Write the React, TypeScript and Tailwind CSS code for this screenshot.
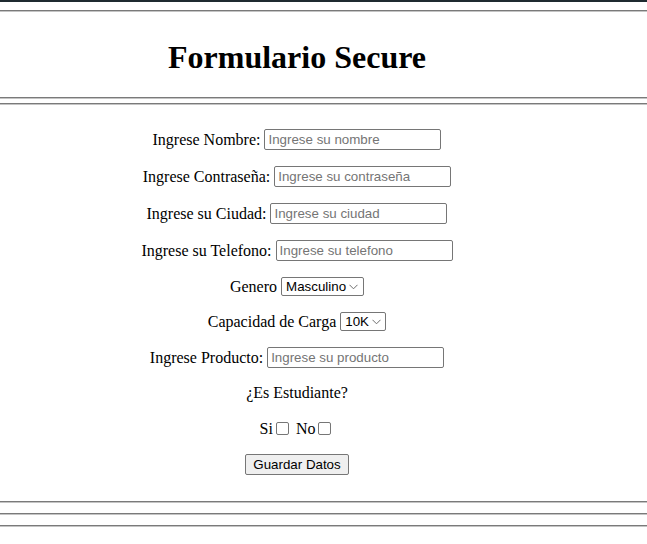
const serif = { fontFamily: '"Liberation Serif", "Times New Roman", serif' };

function Rule({ className = '' }: { className?: string }) {
  return <div className={`h-[2px] border-t border-t-[#7a7a7a] border-b border-b-[#c4c4c4] ${className}`} />;
}

function TextField({ label, placeholder }: { label: string; placeholder: string }) {
  return (
    <div className="flex h-[21px] items-center justify-center gap-[4px]">
      <span className="text-[16px] text-black">{label}</span>
      <div className="flex h-[21px] w-[177px] items-center rounded-[2px] border border-[#767676] bg-white px-[3px] text-left font-['Liberation_Sans',Arial,sans-serif] text-[13.33px] text-[#757575]">
        {placeholder}
      </div>
    </div>
  );
}

function Chevron() {
  return (
    <svg width="9" height="6" viewBox="0 0 9 6" className="ml-[3px]">
      <path d="M0.5 0.8 L4.5 4.8 L8.5 0.8" fill="none" stroke="#6d6d6d" strokeWidth="1" />
    </svg>
  );
}

function SelectField({ label, value, width }: { label: string; value: string; width: string }) {
  return (
    <div className="flex h-[19px] items-center justify-center gap-[4px]">
      <span className="text-[16px] text-black">{label}</span>
      <div
        className={`flex h-[19px] ${width} items-center rounded-[2px] border border-[#767676] bg-white pl-[4px] font-['Liberation_Sans',Arial,sans-serif] text-[13.33px] text-black`}
      >
        {value}
        <Chevron />
      </div>
    </div>
  );
}

function Box() {
  return <span className="mx-[3px] inline-block h-[13px] w-[13px] rounded-[2px] border border-[#767676] bg-white" />;
}

export default function App() {
  return (
    <div className="min-h-[544px] bg-white" style={serif}>
      <div className="h-[2px] bg-[#1f2a30]" />
      <Rule className="mt-[8px]" />

      <div className="h-[85px] w-[594px] pt-[21px] text-center">
        <h1 className="text-[32px] font-bold leading-normal text-black">Formulario Secure</h1>
      </div>

      <Rule />
      <Rule className="mt-[4px]" />

      <form className="mt-[24px] flex w-[594px] flex-col gap-[16px] text-center">
        <TextField label="Ingrese Nombre:" placeholder="Ingrese su nombre" />
        <TextField label="Ingrese Contraseña:" placeholder="Ingrese su contraseña" />
        <TextField label="Ingrese su Ciudad:" placeholder="Ingrese su ciudad" />
        <TextField label="Ingrese su Telefono:" placeholder="Ingrese su telefono" />
        <SelectField label="Genero" value="Masculino" width="w-[83px]" />
        <SelectField label="Capacidad de Carga" value="10K" width="w-[46px]" />
        <TextField label="Ingrese Producto:" placeholder="Ingrese su producto" />

        <div className="flex h-[18px] items-center justify-center text-[16px]">¿Es Estudiante?</div>

        <div className="flex h-[20px] items-center justify-center text-[16px]">
          <span className="mt-[1px]">Si</span>
          <Box />
          <span className="ml-[4px] mt-[1px]">No</span>
          <Box />
        </div>

        <div className="flex justify-center">
          <button
            type="button"
            className="h-[21px] w-[104px] rounded-[2px] border border-[#767676] bg-[#efefef] font-['Liberation_Sans',Arial,sans-serif] text-[13.33px] text-black"
          >
            Guardar Datos
          </button>
        </div>
      </form>

      <Rule className="mt-[26px]" />
      <Rule className="mt-[10px]" />
      <Rule className="mt-[10px]" />
    </div>
  );
}
